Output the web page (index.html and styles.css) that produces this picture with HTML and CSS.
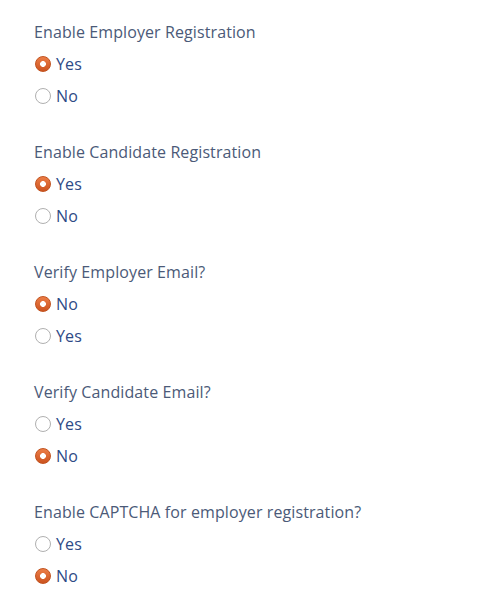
FILE: index.html
```
<!DOCTYPE html>
<html>
<head>
<meta charset="utf-8">
<link rel="stylesheet" href="styles.css">
</head>
<body>
<div class="form">
  <div class="group">
    <div class="label">Enable Employer Registration</div>
    <div class="opt"><span class="radio on"></span><span>Yes</span></div>
    <div class="opt"><span class="radio"></span><span>No</span></div>
  </div>
  <div class="group">
    <div class="label">Enable Candidate Registration</div>
    <div class="opt"><span class="radio on"></span><span>Yes</span></div>
    <div class="opt"><span class="radio"></span><span>No</span></div>
  </div>
  <div class="group">
    <div class="label">Verify Employer Email?</div>
    <div class="opt"><span class="radio on"></span><span>No</span></div>
    <div class="opt"><span class="radio"></span><span>Yes</span></div>
  </div>
  <div class="group">
    <div class="label">Verify Candidate Email?</div>
    <div class="opt"><span class="radio"></span><span>Yes</span></div>
    <div class="opt"><span class="radio on"></span><span>No</span></div>
  </div>
  <div class="group">
    <div class="label">Enable CAPTCHA for employer registration?</div>
    <div class="opt"><span class="radio"></span><span>Yes</span></div>
    <div class="opt"><span class="radio on"></span><span>No</span></div>
  </div>
</div>
</body>
</html>
```
FILE: styles.css
```
html, body { margin: 0; padding: 0; background: #fff; }
body { font-family: "Open Sans", "DejaVu Sans", sans-serif; font-size: 16px; letter-spacing: 0.1px; }
.form { padding: 16px 0 0 34px; display: flex; flex-direction: column; gap: 24px; }
.group { display: flex; flex-direction: column; }
.label { height: 32px; line-height: 32px; color: #4b5a78; }
.opt { height: 32px; display: flex; align-items: center; gap: 5px; color: #2e4a86; padding-left: 1px; }
.radio {
  width: 14px; height: 14px; border-radius: 50%;
  border: 1px solid #b0b0b0; background: #fff; box-sizing: content-box;
  flex: none;
}
.radio.on {
  border: 1px solid #c2521e;
  background: radial-gradient(circle, #fff 0 2.6px, transparent 3.2px), linear-gradient(#ec7d46, #cc5420);
}
```
